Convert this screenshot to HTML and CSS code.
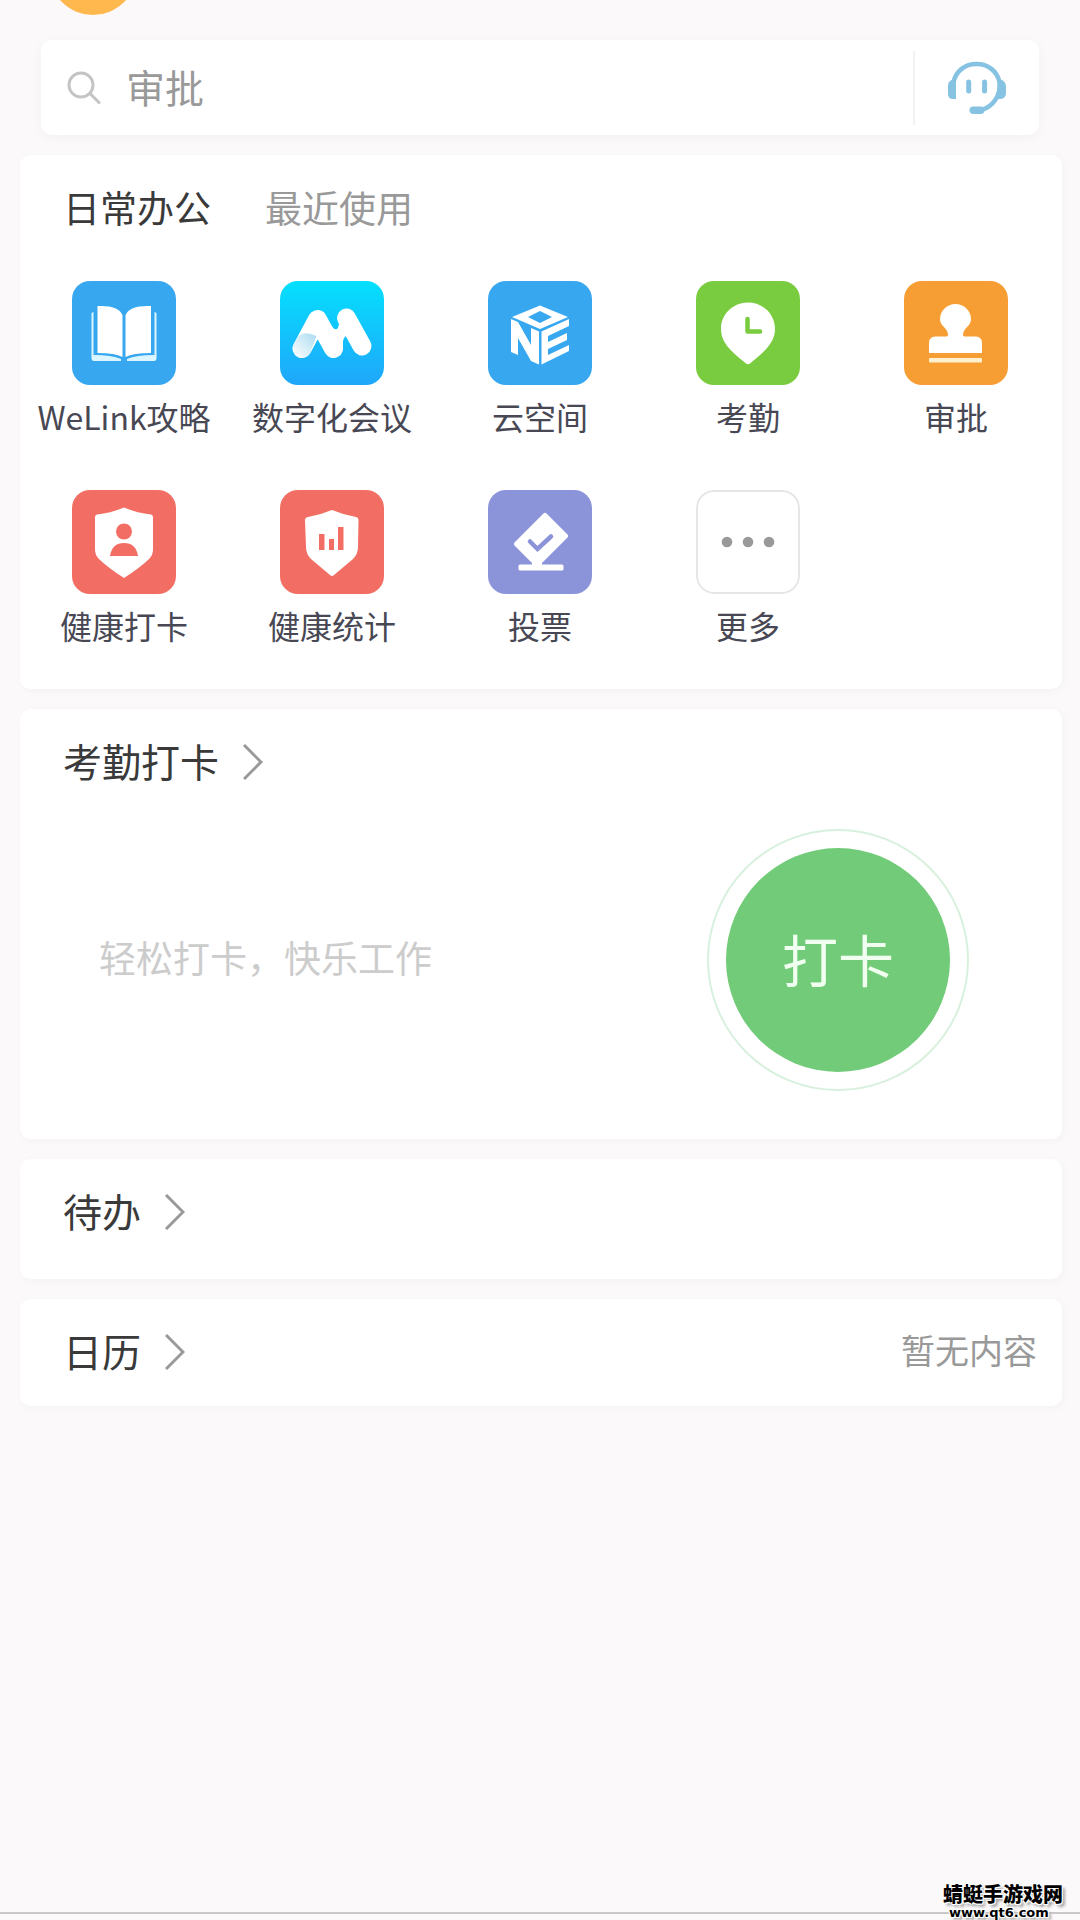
FILE: index.html
```html
<!DOCTYPE html>
<html lang="zh-CN">
<head>
<meta charset="utf-8">
<meta name="viewport" content="width=device-width, initial-scale=1">
<title>日常办公</title>
<link rel="stylesheet" href="styles.css">
</head>
<body>
<div class="page">
  <header class="topbar"><span class="avatar"></span></header>

  <form class="search" role="search">
    <svg class="search-icon" viewBox="0 0 34 34" aria-hidden="true"><circle cx="14" cy="14" r="12" /><path d="M23 22.500L32 31.500" /></svg>
    <input class="search-input" type="text" placeholder="审批" aria-label="搜索">
    <button class="support" type="button" aria-label="客服">
      <svg viewBox="0 0 60 56" aria-hidden="true">
        <path d="M6.500 22C9 11 18 4 29.500 4S50 11 52.500 22C54 36 46 46 35 50" fill="none" stroke="#86c3e3" stroke-width="4.500"/>
        <path d="M9 20v19H6Q1 39 1 34V26Q1 21 5 20zM51 20l4 0Q59 22 59 27v6Q59 38 54 39H50z" fill="#86c3e3"/>
        <rect x="22.500" y="46.500" width="15" height="7.500" rx="3.700" fill="#86c3e3"/>
        <path d="M21.700 22v9M37.600 22v9" stroke="#86c3e3" stroke-width="5" stroke-linecap="round"/>
      </svg>
    </button>
  </form>

  <main class="cards">
    <section class="card">
      <div class="tabs" role="tablist">
        <button class="tab tab-active" type="button" role="tab" aria-selected="true">日常办公</button>
        <button class="tab" type="button" role="tab" aria-selected="false">最近使用</button>
      </div>
      <nav class="apps">
        <a class="app" href="#">
          <svg class="tile blue" viewBox="0 0 104 104" aria-hidden="true">
            <path d="M25.500 25Q46 24 50.500 34V76Q43 72 25.500 72zM79 25Q58 24 53.500 34V76Q61 72 79 72z" fill="#fff"/>
            <path d="M19.500 32l2-1V74Q40 74 49 78V80H22Q19.500 80 19.500 77zM84.500 32l-2-1V74Q64 74 55 78V80H82Q84.500 80 84.500 77z" fill="#dcf5ff"/>
          </svg>
          <span class="label">WeLink攻略</span>
        </a>
        <a class="app" href="#">
          <svg class="tile" viewBox="0 0 104 104" aria-hidden="true">
            <defs>
              <linearGradient id="sky" x1="0" y1="0" x2="0" y2="1"><stop offset="0" stop-color="#04e0fe"/><stop offset="1" stop-color="#20a6fa"/></linearGradient>
              <linearGradient id="fold" x1="0" y1="1" x2="1" y2="0"><stop offset="0" stop-color="#fff"/><stop offset="1" stop-color="#a9dcf0"/></linearGradient>
            </defs>
            <rect width="104" height="104" fill="url(#sky)"/>
            <path d="M22 67.500L37.500 38.500L53.500 67.500M66.500 37L82 65" fill="none" stroke="#fff" stroke-width="19" stroke-linecap="round" stroke-linejoin="round"/>
            <path d="M50 43Q55 51 58 47L59 43L70 54Q64 54 63 60V68H50z" fill="#fff"/>
            <path d="M13.500 64L18 56Q24 49 36.500 55L30 72Q25 79 18 76Q12 72 13.500 64z" fill="url(#fold)"/>
          </svg>
          <span class="label">数字化会议</span>
        </a>
        <a class="app" href="#">
          <svg class="tile blue" viewBox="0 0 104 104" aria-hidden="true">
            <path fill="#fff" fill-rule="evenodd" d="M52 24.500L80 36L52 48L24 36zM52 30L40 36L52 42L64 36z"/>
            <path fill="#fff" d="M23 38L30 41L43 64V47L51 50.500V83.500L43 80L30 57V74L23 71z"/>
            <path fill="#fff" d="M53.500 50.500L81 38V45L60 55V61L79 52V59L60 68V74L81 64V70L53.500 83.500z"/>
          </svg>
          <span class="label">云空间</span>
        </a>
        <a class="app" href="#">
          <svg class="tile green" viewBox="0 0 104 104" aria-hidden="true">
            <path d="M52 21.500C67 21.500 79 33 79 48C79 62 68 71 54 82.500Q52 84 50 82.500C36 71 25 62 25 48C25 33 37 21.500 52 21.500z" fill="#fff"/>
            <path d="M51.500 38V50.500H64" fill="none" stroke="#79cb3f" stroke-width="4.500" stroke-linecap="round" stroke-linejoin="round"/>
          </svg>
          <span class="label">考勤</span>
        </a>
        <a class="app" href="#">
          <svg class="tile orange" viewBox="0 0 104 104" aria-hidden="true">
            <path d="M51.500 23A15.500 15.500 0 0 1 67 38.500C67 45 59 47 59 54Q59 55.500 61 55.500H72Q78 56 78 62V72H25V62Q25 56 31 55.500H42Q44 55.500 44 54C44 47 36 45 36 38.500A15.500 15.500 0 0 1 51.500 23z" fill="#fff"/>
            <rect x="25" y="77" width="53" height="4.500" rx="1" fill="#fff0cf"/>
          </svg>
          <span class="label">审批</span>
        </a>
        <a class="app" href="#">
          <svg class="tile red" viewBox="0 0 104 104" aria-hidden="true">
            <path d="M52 17.500Q65 23 79 24.500Q81 25 81 27V60Q81 65 77 69Q69 77 52 88Q35 77 27 69Q23 65 23 60V27Q23 25 25 24.500Q39 23 52 17.500z" fill="#fff"/>
            <circle cx="52" cy="41.500" r="8"/>
            <path d="M38 66Q40 53 52 53T66 66z"/>
          </svg>
          <span class="label">健康打卡</span>
        </a>
        <a class="app" href="#">
          <svg class="tile red" viewBox="0 0 104 104" aria-hidden="true">
            <path d="M52 20Q64 25 76 27Q78.500 27.500 78.500 30L78 57Q78 64 73 69L54 85Q52 87 50 85L31 69Q26 64 26 57L25 30Q25 27.500 28 27Q40 25 52 20z" fill="#fff"/>
            <path d="M39 44h5.500v16H39zM49 49h5v11h-5zM58 37h5.500v23H58z"/>
          </svg>
          <span class="label">健康统计</span>
        </a>
        <a class="app" href="#">
          <svg class="tile violet" viewBox="0 0 104 104" aria-hidden="true">
            <path d="M55.500 23.500Q57 22 58.500 23.500L79.500 44.500Q81 46 79.500 47.500L54 73V75H44V73L26.500 55.500Q25 54 26.500 52.500z" fill="#fff"/>
            <rect x="30.500" y="74.500" width="45" height="6" rx="1.500" fill="#fff"/>
            <path d="M42 51.500L49.500 59L63 46.500" fill="none" stroke="#8c94d9" stroke-width="4.500" stroke-linecap="round"/>
          </svg>
          <span class="label">投票</span>
        </a>
        <a class="app" href="#">
          <svg class="tile more" viewBox="0 0 104 104" aria-hidden="true">
            <rect x="1" y="1" width="102" height="102" rx="17" fill="#fff" stroke="#e6e6e6" stroke-width="2"/>
            <circle cx="31" cy="52" r="5.300"/><circle cx="52" cy="52" r="5.300"/><circle cx="73" cy="52" r="5.300"/>
          </svg>
          <span class="label">更多</span>
        </a>
      </nav>
    </section>

    <section class="card">
      <h2 class="heading"><a class="title" href="#">考勤打卡<svg class="chevron" viewBox="0 0 20 36" aria-hidden="true"><path d="M1 1L18 18L1 35"/></svg></a></h2>
      <div class="clock">
        <p class="slogan">轻松打卡，快乐工作</p>
        <div class="ring"><button class="punch" type="button">打卡</button></div>
      </div>
    </section>

    <section class="card todo">
      <h2 class="heading"><a class="title" href="#">待办<svg class="chevron" viewBox="0 0 20 36" aria-hidden="true"><path d="M1 1L18 18L1 35"/></svg></a></h2>
    </section>

    <section class="card calendar">
      <h2 class="heading"><a class="title" href="#">日历<svg class="chevron" viewBox="0 0 20 36" aria-hidden="true"><path d="M1 1L18 18L1 35"/></svg></a></h2>
      <span class="empty">暂无内容</span>
    </section>
  </main>

  <footer class="footer">
    <div class="mark"><span class="mark-name">蜻蜓手游戏网</span><span class="mark-url">www.qt6.com</span></div>
  </footer>
</div>
</body>
</html>
```
FILE: styles.css
```css
* { box-sizing: border-box; }

body {
  margin: 0;
  background: #fbf9fa;
  color: #3a3a3a;
  font-family: "Noto Sans CJK SC", "Noto Sans", sans-serif;
}

a { color: inherit; text-decoration: none; }

button {
  padding: 0;
  border: 0;
  background: none;
  color: inherit;
  font: inherit;
  cursor: pointer;
}

.page {
  display: flex;
  flex-direction: column;
  min-height: 100vh;
}

.topbar {
  height: 40px;
  padding-left: 49px;
  overflow: hidden;
}

.avatar {
  display: block;
  width: 88px;
  height: 88px;
  margin-top: -73px;
  border-radius: 50%;
  background: #ffb84d;
}

.search {
  display: flex;
  align-items: center;
  height: 95px;
  margin: 0 41px 20px;
  padding-left: 26px;
  border-radius: 10px;
  background: #fff;
  box-shadow: 0 2px 12px rgba(0, 20, 10, 0.04);
}

.search-icon {
  flex: none;
  width: 34px;
  height: 34px;
  fill: none;
  stroke: #c4c4c4;
  stroke-width: 3;
  stroke-linecap: round;
}

.search-input {
  flex: 1;
  min-width: 0;
  height: 60px;
  margin: 0;
  padding: 0 0 4px 25px;
  border: 0;
  outline: 0;
  background: none;
  color: #3a3a3a;
  font: inherit;
  font-size: 39px;
}

.search-input::placeholder { color: #999; opacity: 1; }

.support {
  display: flex;
  align-items: center;
  justify-content: center;
  width: 126px;
  height: 74px;
  border-left: 2px solid #f2f2f3;
}

.support svg { width: 60px; height: 56px; }

.cards {
  display: flex;
  flex-direction: column;
  gap: 20px;
  padding: 0 18px 0 20px;
}

.card {
  padding-top: 29px;
  border-radius: 10px;
  background: #fff;
  box-shadow: 2px 2px 8px rgba(0, 0, 0, 0.03);
}

.tabs {
  display: flex;
  gap: 54px;
  padding-left: 43px;
}

.tab {
  color: #999;
  font-size: 37px;
  line-height: 46px;
}

.tab-active { color: #3a3a3a; }

.apps {
  display: grid;
  grid-template-columns: repeat(5, 1fr);
  row-gap: 55px;
  padding: 51px 2px 45px 0;
}

.app {
  display: flex;
  flex-direction: column;
  align-items: center;
  gap: 12px;
}

.tile {
  width: 104px;
  height: 104px;
  border-radius: 18px;
}

.blue { background: #37a8f0; }
.green { background: #79cb3f; }
.orange { background: #f69e33; }
.red { background: #f26e64; fill: #f26e64; }
.violet { background: #8c94d9; }
.more { fill: #999; }

.label {
  color: #484854;
  font-size: 32px;
  line-height: 38px;
  white-space: nowrap;
}

.heading {
  height: 48px;
  margin: 0;
  font-weight: 400;
}

.title {
  display: flex;
  align-items: flex-start;
  gap: 24px;
  width: max-content;
  padding-left: 43px;
  font-size: 39px;
  line-height: 44px;
}

.chevron {
  width: 20px;
  height: 36px;
  margin-top: 6px;
  fill: none;
  stroke: #999;
  stroke-width: 3;
}

.clock {
  display: flex;
  align-items: center;
  justify-content: space-between;
  padding: 43px 93px 48px 79px;
}

.slogan {
  margin: 0;
  padding-bottom: 6px;
  color: #ccc;
  font-size: 37px;
  line-height: 48px;
}

.ring {
  flex: none;
  padding: 17px;
  border: 2px solid #d8f0de;
  border-radius: 50%;
}

.punch {
  display: block;
  width: 224px;
  height: 224px;
  padding-bottom: 6px;
  border-radius: 50%;
  background: #71cb78;
  color: #f1fff0;
  font-size: 56px;
}

.todo { padding-bottom: 43px; }

.calendar {
  display: flex;
  align-items: flex-start;
  justify-content: space-between;
  padding-right: 25px;
  padding-bottom: 30px;
}

.empty {
  color: #999;
  font-size: 34px;
  line-height: 44px;
}

.footer {
  display: flex;
  justify-content: flex-end;
  margin-top: auto;
  padding-right: 17px;
  background: linear-gradient(#c9c7c9, #c9c7c9) 0 calc(100% - 6px) / 100% 2px no-repeat;
}

.mark {
  display: flex;
  flex-direction: column;
  color: #000;
  font-weight: 900;
  text-shadow: 1px 1px 0 #fff, -1px -1px 0 #fff, 1px -1px 0 #fff, -1px 1px 0 #fff, 3px 3px 3px #999;
}

.mark-name { font-size: 20px; line-height: 24px; }

.mark-url {
  padding-left: 6px;
  font-family: "DejaVu Sans", sans-serif;
  font-size: 13px;
  line-height: 14px;
}
```
